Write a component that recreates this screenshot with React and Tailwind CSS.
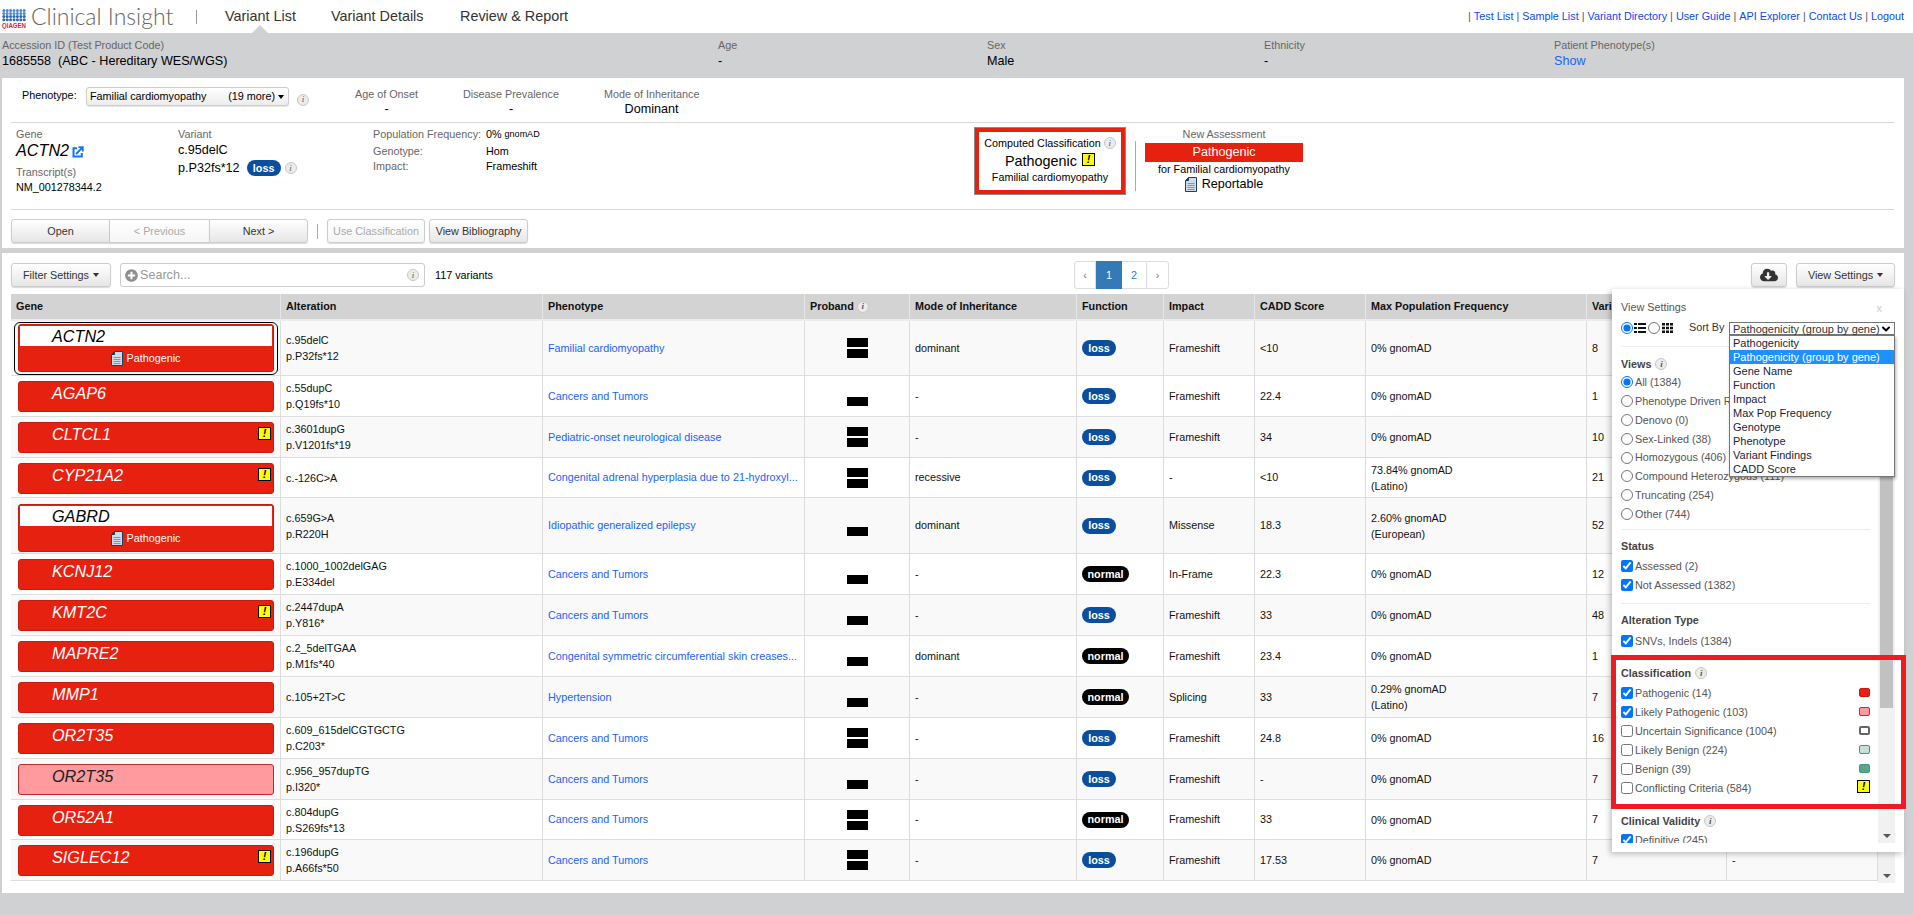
import { ChevronDown } from 'lucide-react'
import { FaCloudDownloadAlt, FaPlusCircle } from 'react-icons/fa'

const ROWS = [
  { h: 55, gene: 'ACTN2', open: true, outline: true, cdna: 'c.95delC', prot: 'p.P32fs*12', pheno: 'Familial cardiomyopathy', band: 2, moi: 'dominant', fn: 'loss', impact: 'Frameshift', cadd: '<10', freq: '0% gnomAD', n: '8' },
  { h: 41, gene: 'AGAP6', cdna: 'c.55dupC', prot: 'p.Q19fs*10', pheno: 'Cancers and Tumors', band: 1, moi: '-', fn: 'loss', impact: 'Frameshift', cadd: '22.4', freq: '0% gnomAD', n: '1' },
  { h: 41, gene: 'CLTCL1', warn: true, cdna: 'c.3601dupG', prot: 'p.V1201fs*19', pheno: 'Pediatric-onset neurological disease', band: 2, moi: '-', fn: 'loss', impact: 'Frameshift', cadd: '34', freq: '0% gnomAD', n: '10' },
  { h: 40, gene: 'CYP21A2', warn: true, cdna: 'c.-126C>A', pheno: 'Congenital adrenal hyperplasia due to 21-hydroxyl...', band: 2, moi: 'recessive', fn: 'loss', impact: '-', cadd: '<10', freq: '73.84% gnomAD', pop: '(Latino)', n: '21' },
  { h: 56, gene: 'GABRD', open: true, cdna: 'c.659G>A', prot: 'p.R220H', pheno: 'Idiopathic generalized epilepsy', band: 1, moi: 'dominant', fn: 'loss', impact: 'Missense', cadd: '18.3', freq: '2.60% gnomAD', pop: '(European)', n: '52' },
  { h: 41, gene: 'KCNJ12', cdna: 'c.1000_1002delGAG', prot: 'p.E334del', pheno: 'Cancers and Tumors', band: 1, moi: '-', fn: 'normal', impact: 'In-Frame', cadd: '22.3', freq: '0% gnomAD', n: '12' },
  { h: 41, gene: 'KMT2C', warn: true, cdna: 'c.2447dupA', prot: 'p.Y816*', pheno: 'Cancers and Tumors', band: 1, moi: '-', fn: 'loss', impact: 'Frameshift', cadd: '33', freq: '0% gnomAD', n: '48' },
  { h: 41, gene: 'MAPRE2', cdna: 'c.2_5delTGAA', prot: 'p.M1fs*40', pheno: 'Congenital symmetric circumferential skin creases...', band: 1, moi: 'dominant', fn: 'normal', impact: 'Frameshift', cadd: '23.4', freq: '0% gnomAD', n: '1' },
  { h: 41, gene: 'MMP1', cdna: 'c.105+2T>C', pheno: 'Hypertension', band: 1, moi: '-', fn: 'normal', impact: 'Splicing', cadd: '33', freq: '0.29% gnomAD', pop: '(Latino)', n: '7' },
  { h: 41, gene: 'OR2T35', cdna: 'c.609_615delCGTGCTG', prot: 'p.C203*', pheno: 'Cancers and Tumors', band: 2, moi: '-', fn: 'loss', impact: 'Frameshift', cadd: '24.8', freq: '0% gnomAD', n: '16' },
  { h: 41, gene: 'OR2T35', light: true, cdna: 'c.956_957dupTG', prot: 'p.I320*', pheno: 'Cancers and Tumors', band: 1, moi: '-', fn: 'loss', impact: 'Frameshift', cadd: '-', freq: '0% gnomAD', n: '7' },
  { h: 40, gene: 'OR52A1', cdna: 'c.804dupG', prot: 'p.S269fs*13', pheno: 'Cancers and Tumors', band: 2, moi: '-', fn: 'normal', impact: 'Frameshift', cadd: '33', freq: '0% gnomAD', n: '7' },
  { h: 41, gene: 'SIGLEC12', warn: true, cdna: 'c.196dupG', prot: 'p.A66fs*50', pheno: 'Cancers and Tumors', band: 2, moi: '-', fn: 'loss', impact: 'Frameshift', cadd: '17.53', freq: '0% gnomAD', n: '7', last: '-' },
]

const HEADERS = ['Gene', 'Alteration', 'Phenotype', 'Proband', 'Mode of Inheritance', 'Function', 'Impact', 'CADD Score', 'Max Population Frequency', 'Variant Findings', '']
const WIDTHS = [270, 262, 262, 105, 167, 87, 91, 111, 221, 140, 151]

const VIEWS = [['All (1384)', true], ['Phenotype Driven Ranking (24)'], ['Denovo (0)'], ['Sex-Linked (38)'], ['Homozygous (406)'], ['Compound Heterozygous (111)'], ['Truncating (254)'], ['Other (744)']]
const SORTS = ['Pathogenicity', 'Pathogenicity (group by gene)', 'Gene Name', 'Function', 'Impact', 'Max Pop Frequency', 'Genotype', 'Phenotype', 'Variant Findings', 'CADD Score']
const CLASSES = [
  ['Pathogenic (14)', true, 'bg-[#e6210f] border-[#c81b10]'],
  ['Likely Pathogenic (103)', true, 'bg-[#ff9a9e] border-[#c42a2a]'],
  ['Uncertain Significance (1004)', false, 'bg-white border-[#666666] border-2'],
  ['Likely Benign (224)', false, 'bg-[#c9e0d8] border-[#3f9a7c]'],
  ['Benign (39)', false, 'bg-[#5aa58c] border-[#3f9a7c]'],
]

function Info() {
  return (
    <span className="inline-flex w-[12px] h-[12px] shrink-0 items-center justify-center rounded-full border border-[#c8c8c8] bg-[#ececec] text-[9px] leading-none italic text-[#555] font-['Liberation_Serif',serif]">
      i
    </span>
  )
}

function Warn({ className = '' }) {
  return (
    <span className={`inline-flex w-[13px] h-[13px] items-center justify-center border border-black bg-[#ffff00] text-[11px] leading-none font-bold italic text-black ${className}`}>
      !
    </span>
  )
}

function DocIcon({ className = '' }) {
  return (
    <svg viewBox="0 0 12 15" className={`w-[12px] h-[15px] shrink-0 ${className}`}>
      <path d="M3.5.5h8v14H.5V3.5z" fill="#cfdbe6" stroke="#1d3f66" />
      <path d="M3.5.5v3h-3" fill="#1d3f66" stroke="#1d3f66" />
      <path d="M2.5 6.5h7M2.5 8.5h7M2.5 10.5h7M2.5 12.5h7" stroke="#7f98b0" />
    </svg>
  )
}

function Logo() {
  const dots = []
  for (let y = 0; y < 4; y++) {
    for (let x = 0; x < 7; x++) {
      dots.push(<circle key={`${x}-${y}`} cx={1.8 + x * 3.4} cy={5.4 + y * 3.1} r="1.5" fill={y > 1 ? '#2f66b0' : '#4f8ad0'} />)
    }
  }
  return (
    <svg viewBox="0 0 24 24" className="w-[24px] h-[24px] shrink-0">
      {dots}
      <text x="0" y="23.4" fontSize="6.4" fontWeight="700" fill="#e0202a" fontFamily="'Liberation Sans', sans-serif" textLength="24" lengthAdjust="spacingAndGlyphs">QIAGEN</text>
    </svg>
  )
}

function Btn({ className = '', disabled, children }) {
  const tone = disabled ? 'to-[#f5f5f5] text-[#aaa]' : 'to-[#e6e6e6] text-[#333]'
  return (
    <button className={`h-[24px] rounded-[3px] border border-[#ccc] bg-gradient-to-b from-white text-[10.8px] shadow-[0_1px_1px_rgba(0,0,0,0.15)] ${tone} ${className}`}>
      {children}
    </button>
  )
}

function Pill({ fn }) {
  const normal = fn === 'normal'
  return (
    <span className={`inline-flex h-[16px] items-center justify-center rounded-full text-[10.8px] font-bold text-white ${normal ? 'w-[47px] bg-black' : 'w-[34px] bg-[#0a4f9e]'}`}>
      {fn}
    </span>
  )
}

function GeneChip({ row }) {
  if (row.open) {
    const chip = (
      <div className="w-[256px] h-[48px] rounded-[3px] border border-[#c81b10] bg-[#e6210f] p-[1px]">
        <div className="h-[20px] bg-white pl-[32px] text-[16.2px] leading-[20px] italic text-black">{row.gene}</div>
        <div className="flex h-[24px] items-center justify-center gap-[3px] text-[10.8px] text-white">
          <DocIcon />
          Pathogenic
        </div>
      </div>
    )
    if (row.outline) {
      return <div className="ml-[3px] mt-[1px] w-[264px] rounded-[6px] border border-black px-[3px] pt-[1px] pb-[2px]">{chip}</div>
    }
    return <div className="ml-[7px] mt-[6px]">{chip}</div>
  }
  return (
    <div className={`relative ml-[7px] mt-[5px] w-[256px] h-[31px] rounded-[3px] border pl-[33px] text-[16.2px] leading-[23px] italic ${row.light ? 'bg-[#ff9a9e] border-[#c42a2a] text-[#222]' : 'bg-[#e6210f] border-[#c81b10] text-white'}`}>
      {row.gene}
      {row.warn && <Warn className="absolute right-[2px] top-[4px]" />}
    </div>
  )
}

function Row({ row, i }) {
  const cell = `border-b border-r border-[#ddd] px-[5px] align-middle ${i % 2 === 0 ? 'bg-[#f9f9f9]' : 'bg-white'}`
  return (
    <tr>
      <td className={`${cell} !px-0 !align-top`} style={{ height: row.h }}>
        <GeneChip row={row} />
      </td>
      <td className={cell}>
        <div className="leading-[16px]">{row.cdna}</div>
        {row.prot && <div className="leading-[16px]">{row.prot}</div>}
      </td>
      <td className={cell}>
        <a className="block whitespace-nowrap text-[#1a63f5]">{row.pheno}</a>
      </td>
      <td className={cell}>
        <div className="flex flex-col items-center gap-[2px]">
          <div className={`w-[21px] h-[9px] ${row.band === 2 ? 'bg-black' : ''}`} />
          <div className="w-[21px] h-[9px] bg-black" />
        </div>
      </td>
      <td className={cell}>{row.moi}</td>
      <td className={cell}><Pill fn={row.fn} /></td>
      <td className={cell}>{row.impact}</td>
      <td className={cell}>{row.cadd}</td>
      <td className={cell}>
        <div className="leading-[16px]">{row.freq}</div>
        {row.pop && <div className="leading-[16px]">{row.pop}</div>}
      </td>
      <td className={cell}>{row.n}</td>
      <td className={cell}>{row.last}</td>
    </tr>
  )
}

function ScrollBar({ className = '', thumb }) {
  return (
    <div className={`flex w-[17px] flex-col items-center justify-end bg-[#f1f1f1] ${className}`}>
      {thumb && <div className="absolute left-[2px] right-[2px] top-0 h-[374px] bg-[#c1c1c1]" />}
      <div className="mb-[5px] h-0 w-0 border-x-[4px] border-t-[4px] border-x-transparent border-t-[#555]" />
    </div>
  )
}

function Heading({ children, className = '' }) {
  return <div className={`h-[14px] flex items-center gap-[4px] text-[10.8px] font-bold leading-[14px] text-[#444] ${className}`}>{children}</div>
}

function CheckRow({ label, checked, children }) {
  return (
    <label className="flex h-[19px] w-[249px] items-center gap-[2px] text-[10.8px] text-[#555]">
      <input type="checkbox" defaultChecked={checked} className="w-[12px] h-[12px]" />
      <span className="flex-1">{label}</span>
      {children}
    </label>
  )
}

function ViewSettings() {
  return (
    <div className="absolute left-[1610px] top-[36px] z-10 h-[563px] w-[292px] bg-white shadow-[-2px_2px_6px_rgba(0,0,0,0.25)]">
      <div className="h-[554px] overflow-hidden pl-[9px] pt-[11px]">
        <div className="h-[14px] text-[10.8px] leading-[14px] text-[#555]">View Settings</div>
        <div className="mt-[7px] flex h-[13px] items-center text-[10.8px] text-[#333]">
          <input type="radio" name="layout" defaultChecked className="w-[12px] h-[12px]" />
          <svg viewBox="0 0 12 10" className="ml-px w-[12px] h-[10px]">
            <path d="M0 0h3v2H0zM4 0h8v2H4zM0 4h3v2H0zM4 4h8v2H4zM0 8h3v2H0zM4 8h8v2H4z" fill="#111" />
          </svg>
          <input type="radio" name="layout" className="ml-[2px] w-[12px] h-[12px]" />
          <svg viewBox="0 0 11 10" className="ml-[2px] w-[11px] h-[10px]">
            <path d="M0 0h3v2.6H0zM4 0h3v2.6H4zM8 0h3v2.6H8zM0 3.7h3v2.6H0zM4 3.7h3v2.6H4zM8 3.7h3v2.6H8zM0 7.4h3V10H0zM4 7.4h3V10H4zM8 7.4h3V10H8z" fill="#111" />
          </svg>
          <span className="ml-[16px]">Sort By</span>
        </div>
        <div className="mt-[12px] h-px w-[249px] bg-[#eee]" />
        <Heading className="mt-[10px]">Views <Info /></Heading>
        <div className="mt-[2px]">
          {VIEWS.map(([label, checked]) => (
            <label key={label} className="flex h-[18.8px] items-center gap-[2px] text-[10.8px] text-[#555]">
              <input type="radio" name="views" defaultChecked={checked} className="w-[12px] h-[12px]" />
              {label}
            </label>
          ))}
        </div>
        <div className="mt-[6px] h-px w-[249px] bg-[#eee]" />
        <Heading className="mt-[9px]">Status</Heading>
        <div className="mt-[3px]">
          <CheckRow label="Assessed (2)" checked />
          <CheckRow label="Not Assessed (1382)" checked />
        </div>
        <div className="mt-[9px] h-px w-[249px] bg-[#eee]" />
        <Heading className="mt-[9px]">Alteration Type</Heading>
        <div className="mt-[4px]"><CheckRow label="SNVs, Indels (1384)" checked /></div>
        <Heading className="mt-[16px]">Classification <Info /></Heading>
        <div className="mt-[3px]">
          {CLASSES.map(([label, checked, swatch]) => (
            <CheckRow key={label} label={label} checked={checked}>
              <span className={`h-[9px] w-[11px] rounded-[2px] border ${swatch}`} />
            </CheckRow>
          ))}
          <CheckRow label="Conflicting Criteria (584)"><Warn className="mb-[3px]" /></CheckRow>
        </div>
        <Heading className="mt-[17px]">Clinical Validity <Info /></Heading>
        <div className="mt-[2px]"><CheckRow label="Definitive (245)" checked /></div>
      </div>
      <span className="absolute right-[22px] top-[12px] text-[11px] leading-[14px] text-[#ccc]">x</span>
      <ScrollBar thumb className="absolute right-[9px] top-[45px] bottom-[9px]" />
      {/* the select is drawn open, so it sits on top of the list below it */}
      <div className="absolute left-[117px] top-[33px] z-20 w-[166px] whitespace-nowrap text-[11px] leading-[14px] text-[#1c1c3a]">
        <div className="flex h-[13px] items-center justify-between border border-[#767676] bg-white pl-[3px] pr-[2px] text-[#333]">
          Pathogenicity (group by gene)
          <ChevronDown size={12} strokeWidth={4} className="text-black" />
        </div>
        <div className="border border-[#767676] bg-white shadow-[1px_2px_3px_rgba(0,0,0,0.3)]">
          {SORTS.map((s, i) => (
            <div key={s} className={`h-[14px] pl-[3px] ${i === 1 ? 'bg-[#1e90ff] text-white' : ''}`}>{s}</div>
          ))}
        </div>
      </div>
      {/* review annotation drawn over the Classification block */}
      <div className="pointer-events-none absolute left-[-1px] top-[366px] z-20 h-[154px] w-[295px] border-[5px] border-[#ed1c24]" />
    </div>
  )
}

export default function App() {
  return (
    <div className="h-[915px] overflow-hidden bg-[#cfd1d3] font-['Liberation_Sans',Arial,sans-serif] text-[10.8px] text-black">
      <header className="relative flex h-[33px] items-center bg-white pl-[2px]">
        <Logo />
        <span className="ml-[5px] w-[142px] whitespace-nowrap font-['Lato',sans-serif] text-[23px] font-light leading-none text-[#666]">Clinical Insight</span>
        <span className="ml-[23px] h-[14px] w-px bg-[#999]" />
        <nav className="ml-[28px] flex text-[14.4px] text-[#333]">
          <a className="w-[106px]">Variant List</a>
          <a className="w-[129px]">Variant Details</a>
          <a>Review &amp; Report</a>
        </nav>
        <div className="ml-auto flex gap-[3px] pr-[9px] text-[10.8px] text-[#555]">
          {['Test List', 'Sample List', 'Variant Directory', 'User Guide', 'API Explorer', 'Contact Us', 'Logout'].map(l => (
            <span key={l} className="flex gap-[3px]">| <a className="text-[#0d47f0]">{l}</a></span>
          ))}
        </div>
        <div className="absolute bottom-0 left-[252px] h-0 w-0 border-x-[8px] border-b-[8px] border-x-transparent border-b-[#cfd1d3]" />
      </header>

      <section className="flex h-[45px] pt-[5px] leading-[14px] text-[#666]">
        <div className="w-[718px] pl-[2px]">Accession ID (Test Product Code)<div className="text-[12.6px] leading-[18px] text-black">1685558&nbsp; (ABC - Hereditary WES/WGS)</div></div>
        <div className="w-[269px]">Age<div className="text-[12.6px] leading-[18px] text-black">-</div></div>
        <div className="w-[277px]">Sex<div className="text-[12.6px] leading-[18px] text-black">Male</div></div>
        <div className="w-[290px]">Ethnicity<div className="text-[12.6px] leading-[18px] text-black">-</div></div>
        <div>Patient Phenotype(s)<div className="text-[12.6px] leading-[18px] text-[#1a63f5]">Show</div></div>
      </section>

      <section className="ml-[2px] h-[170px] w-[1902px] bg-white">
        <div className="flex h-[44px] items-start pl-[20px] pt-[9px]">
          <span className="w-[64px] pt-[1px] leading-[14px]">Phenotype:</span>
          <div className="flex h-[19px] w-[203px] items-center rounded-[3px] border border-[#ccc] bg-gradient-to-b from-white to-[#ececec] pl-[3px] pr-[4px] shadow-[0_1px_1px_rgba(0,0,0,0.1)]">
            <span className="flex-1">Familial cardiomyopathy</span>
            <span>(19 more)</span>
            <span className="ml-[3px] h-0 w-0 border-x-[3.5px] border-t-[4px] border-x-transparent border-t-black" />
          </div>
          <span className="ml-[8px] mt-[3px]"><Info /></span>
          <div className="ml-[46px] w-[63px] whitespace-nowrap text-center leading-[14px] text-[#666]">Age of Onset<div className="text-[12.6px] leading-[16px] text-black">-</div></div>
          <div className="ml-[45px] w-[96px] whitespace-nowrap text-center leading-[14px] text-[#666]">Disease Prevalence<div className="text-[12.6px] leading-[16px] text-black">-</div></div>
          <div className="ml-[45px] w-[95px] whitespace-nowrap text-center leading-[14px] text-[#666]">Mode of Inheritance<div className="text-[12.6px] leading-[16px] text-black">Dominant</div></div>
        </div>
        <div className="ml-[9px] h-px w-[1883px] bg-[#d8d8d8]" />

        <div className="flex h-[86px] pl-[14px] pt-[4px]">
          <div className="w-[162px]">
            <div className="leading-[14px] text-[#666]">Gene</div>
            <div className="flex h-[19px] items-center gap-[3px] text-[16.2px] italic">
              ACTN2
              <svg viewBox="0 0 12 12" className="mt-[2px] w-[12px] h-[12px]" fill="none" stroke="#1473f0" strokeWidth="2">
                <path d="M5 2.2H1.5v8.3h8.3V7" />
                <path d="M4 8l6-6M6.5 1.2h4.3v4.3" strokeWidth="1.8" />
              </svg>
            </div>
            <div className="mt-[5px] leading-[14px] text-[#666]">Transcript(s)</div>
            <div className="mt-px leading-[14px]">NM_001278344.2</div>
          </div>
          <div className="w-[195px]">
            <div className="leading-[14px] text-[#666]">Variant</div>
            <div className="text-[12.6px] leading-[18px]">c.95delC</div>
            <div className="flex h-[18px] items-center text-[12.6px]">
              p.P32fs*12
              <span className="ml-[7px] flex"><Pill fn="loss" /></span>
              <span className="ml-[4px] flex"><Info /></span>
            </div>
          </div>
          <div className="w-[601px] leading-[14px]">
            <div className="flex"><span className="w-[113px] text-[#666]">Population Frequency:</span>0%&nbsp;<span className="text-[9px]">gnomAD</span></div>
            <div className="mt-[3px] flex"><span className="w-[113px] text-[#666]">Genotype:</span>Hom</div>
            <div className="mt-px flex"><span className="w-[113px] text-[#666]">Impact:</span>Frameshift</div>
          </div>
          <div className="h-[68px] w-[152px] border border-[#8a8d8f]">
            <div className="flex h-full flex-col items-center border-4 border-[#e6210f] pt-[4px]">
              <div className="flex items-center gap-[3px] leading-[14px]">Computed Classification <Info /></div>
              <div className="mt-[2px] flex items-center gap-[5px] text-[14.4px] leading-[18px]">Pathogenic <Warn className="mb-[4px]" /></div>
              <div className="leading-[14px]">Familial cardiomyopathy</div>
            </div>
          </div>
          <div className="ml-[9px] mt-[14px] h-[50px] w-px bg-[#aaa]" />
          <div className="ml-[9px] w-[158px] text-center">
            <div className="leading-[14px] text-[#666]">New Assessment</div>
            <div className="mt-[2px] h-[19px] bg-[#e6210f] text-[12.6px] leading-[19px] text-white">Pathogenic</div>
            <div className="whitespace-nowrap leading-[14px]">for Familial cardiomyopathy</div>
            <div className="flex h-[16px] items-center justify-center gap-[5px] text-[12.6px]"><DocIcon />Reportable</div>
          </div>
        </div>
        <div className="ml-[9px] h-px w-[1883px] bg-[#d8d8d8]" />

        <div className="flex items-center pl-[9px] pt-[9px]">
          <div className="flex">
            <Btn className="w-[99px] rounded-r-none">Open</Btn>
            <Btn disabled className="w-[99px] rounded-none border-x-0">&lt; Previous</Btn>
            <Btn className="w-[99px] rounded-l-none">Next &gt;</Btn>
          </div>
          <span className="ml-[9px] h-[15px] w-px bg-[#aaa]" />
          <Btn disabled className="ml-[9px] w-[98px]">Use Classification</Btn>
          <Btn className="ml-[4px] w-[99px]">View Bibliography</Btn>
        </div>
      </section>

      <section className="relative ml-[2px] mt-[5px] h-[640px] w-[1902px] bg-white">
        <div className="flex h-[34px] items-start pl-[9px] pt-[10px]">
          <div className="flex w-[1063px] items-center">
            <Btn className="flex w-[100px] items-center justify-center gap-[4px]">
              Filter Settings
              <span className="h-0 w-0 border-x-[3.5px] border-t-[4px] border-x-transparent border-t-[#333]" />
            </Btn>
            <div className="ml-[9px] flex h-[24px] w-[305px] items-center rounded-[3px] border border-[#ccc] bg-white pl-[4px] pr-[5px] text-[12.6px] text-[#999]">
              <FaPlusCircle size={13} className="mr-[2px] text-[#8f8f8f]" />
              <span className="flex-1">Search...</span>
              <Info />
            </div>
            <span className="ml-[10px]">117 variants</span>
          </div>
          <div className="mt-[-2px] flex h-[28px] text-[#337ab7]">
            <span className="flex w-[22px] items-center justify-center rounded-l-[3px] border border-[#ddd] text-[#777]">‹</span>
            <span className="flex w-[26px] items-center justify-center bg-[#337ab7] text-white">1</span>
            <span className="flex w-[24px] items-center justify-center border-y border-[#ddd]">2</span>
            <span className="flex w-[23px] items-center justify-center rounded-r-[3px] border border-[#ddd] text-[#777]">›</span>
          </div>
          <div className="ml-auto flex gap-[9px] pr-[9px]">
            <Btn className="flex w-[36px] items-center justify-center"><FaCloudDownloadAlt size={18} className="text-[#333]" /></Btn>
            <Btn className="flex w-[99px] items-center justify-center gap-[4px]">
              View Settings
              <span className="h-0 w-0 border-x-[3.5px] border-t-[4px] border-x-transparent border-t-[#333]" />
            </Btn>
          </div>
        </div>

        <div className="ml-[9px] mt-[7px] flex h-[589px] w-[1884px] overflow-hidden">
          <table className="w-[1867px] table-fixed border-separate border-spacing-0 self-start text-[10.8px] text-[#111]">
            <colgroup>
              {WIDTHS.map((w, i) => <col key={i} style={{ width: w }} />)}
            </colgroup>
            <thead>
              <tr>
                {HEADERS.map((h, i) => (
                  <th key={i} className="h-[27px] overflow-hidden whitespace-nowrap border-b-2 border-r border-b-[#ececec] border-r-[#e6e6e6] bg-[#d3d3d3] px-[5px] text-left font-bold">
                    <span className="inline-flex items-center gap-[3px]">{h}{h === 'Proband' && <Info />}</span>
                  </th>
                ))}
              </tr>
            </thead>
            <tbody>
              {ROWS.map((r, i) => <Row key={i} row={r} i={i} />)}
            </tbody>
          </table>
          <ScrollBar className="h-full" />
        </div>

        <ViewSettings />
      </section>
    </div>
  )
}
